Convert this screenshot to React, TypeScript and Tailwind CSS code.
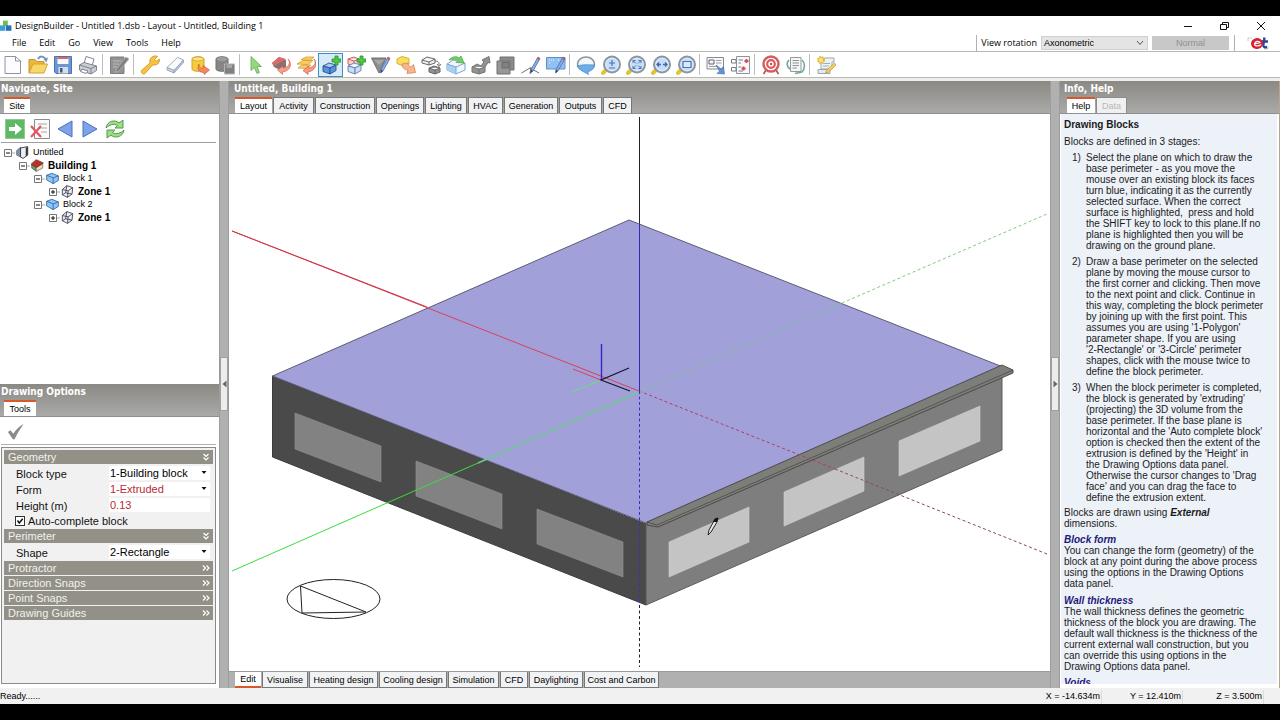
import React from "react";

type IconProps = { children: React.ReactNode; className?: string };

function Icon({ children, className = "h-5 w-5" }: IconProps) {
  return (
    <svg viewBox="0 0 20 20" className={className} fill="none" aria-hidden="true">
      {children}
    </svg>
  );
}

/* ---------- toolbar drawings ---------- */

const pencil = (
  <>
    <path d="M17 2 L19 3.5 L12 16 L9.5 18 L10 14.5 Z" fill="#86aee0" stroke="#4d6fa8" strokeWidth="0.8" />
    <path d="M17 2 L19 3.5 L18 5.2 L16 3.8 Z" fill="#d9534a" />
    <path d="M10 14.5 L12 16 L9.5 18 Z" fill="#3c4350" />
  </>
);

const plus = (
  <path d="M14 1h3v3h3v3h-3v3h-3V7h-3V4h3Z" fill="#4fc742" stroke="#259028" strokeWidth="0.8" />
);

const lens = (
  <>
    <path d="M2 18 L5.5 14.5" stroke="#e5c332" strokeWidth="4" strokeLinecap="round" />
    <circle cx="11" cy="9.5" r="8" fill="#b9d3f2" stroke="#8b969f" strokeWidth="2" />
    <circle cx="11" cy="9.5" r="6.3" fill="#c6dcf7" stroke="#e8f1fb" strokeWidth="0.8" />
  </>
);

function box(fill: string, top: string, stroke: string) {
  return (
    <g stroke={stroke} strokeWidth="0.9" strokeLinejoin="round">
      <path d="M2 11 L8 8 L15 10 L9 13 Z" fill={top} />
      <path d="M2 11 L9 13 V19 L2 16.5 Z" fill={fill} />
      <path d="M9 13 L15 10 V15.5 L9 19 Z" fill={fill} />
    </g>
  );
}

const ICONS: Record<string, React.ReactNode> = {
  New: (
    <path d="M2 1.5 H12.5 L17.5 6 V18.5 H2 Z M12.5 1.5 V6 H17.5" fill="#fdfdff" stroke="#8d93a0" />
  ),
  Open: (
    <>
      <path d="M1 18 V4.5 H7 L9 6.5 H16 V9" fill="#e9b93c" stroke="#c5942b" />
      <path d="M1 18 L5 9 H19.5 L16 18 Z" fill="#f9d766" stroke="#d2a136" />
      <path d="M10 4 C12 0.5 16 1 18 4.5" stroke="#6f91c4" strokeWidth="2" />
      <path d="M15.5 4 L20 2.5 L18.5 7.5 Z" fill="#6f91c4" />
    </>
  ),
  Save: (
    <>
      <path d="M1.5 1.5 H18.5 V18.5 H3 L1.5 17 Z" fill="#6a97d2" stroke="#4a74b0" />
      <path d="M4.5 2 H15.5 V9 H4.5 Z" fill="#f7f9fc" />
      <path d="M4.5 2 H15.5 V4 H4.5 Z" fill="#e0645a" />
      <path d="M5.5 12 H15 V18.5 H5.5 Z" fill="#d7dde6" />
      <path d="M7 13 H9.5 V17.5 H7 Z" fill="#47576e" />
    </>
  ),
  Print: (
    <g stroke="#737985" strokeWidth="0.9" strokeLinejoin="round">
      <path d="M6 9 L8 1.5 L16 4 L14 11 Z" fill="#fff" />
      <path d="M1.5 10 L6 7.5 L18.5 11 V15.5 L13 19 L1.5 15 Z" fill="#c9cdd6" />
      <path d="M1.5 10 L13 13.5 L18.5 11 M13 13.5 V19" />
      <path d="M4 14 L10 16 L8 18.5 L2.5 16.5 Z" fill="#fff" />
    </g>
  ),
  "Edit notes": (
    <>
      <path d="M1.5 2 H15 V18.5 H1.5 Z" fill="#929292" stroke="#7d7d7d" />
      <path d="M4 6 H12 M4 9 H10 M4 12 H8" stroke="#bdbdbd" />
      <path d="M17 2 L20 4 L10 16 L6.5 17.5 L7.5 14 Z" fill="#7f7f7f" stroke="#b9b9b9" strokeWidth="0.8" />
    </>
  ),
  Options: (
    <path
      d="M12 2 C14 0.5 17 0.7 17.5 1.5 L14.5 4.5 L16 6.5 L19.3 4 C20 7 18 10 14.5 10 L12.5 10 L5 18.5 C3.5 20 0.5 18 1.5 15.5 L10 8 C9.5 5 10 3.5 12 2 Z"
      fill="#f8c23e"
      stroke="#d2962a"
      strokeWidth="0.9"
    />
  ),
  Erase: (
    <g stroke="#98a1b3" strokeWidth="0.9" strokeLinejoin="round">
      <path d="M2 12.5 L12.5 2.5 L18.5 5 L9 15.5 Z" fill="#fafbfe" />
      <path d="M2 12.5 L9 15.5 V18 L2 15 Z" fill="#d1d8e6" />
      <path d="M9 15.5 L18.5 5 V7.5 L9 18 Z" fill="#bcc6da" />
    </g>
  ),
  Database: (
    <>
      <path d="M2 4 C2 1 14 1 14 4 V14 C14 17 2 17 2 14 Z" fill="#f6cc3c" stroke="#d3a02c" />
      <ellipse cx="8" cy="4" rx="5.8" ry="2" fill="#fce585" stroke="#d3a02c" strokeWidth="0.8" />
      <path d="M9 9 C9 12.5 11 13.5 13 13.5 V10.5 L19.5 15 L14 19.5 V17.5 C9 17.5 6.5 14 9 9 Z" fill="#ef8a5c" stroke="#cf5b35" strokeWidth="0.7" />
    </>
  ),
  "Save database": (
    <>
      <path d="M1 4 C1 1 13 1 13 4 V14 C13 17 1 17 1 14 Z" fill="#868686" stroke="#6f6f6f" />
      <ellipse cx="7" cy="4" rx="5.5" ry="2" fill="#9d9d9d" />
      <path d="M9.5 9 H19.5 V19 H9.5 Z" fill="#808080" stroke="#b5b5b5" />
      <path d="M11.5 9.5 H17 V13 H11.5 Z" fill="#a5a5a5" />
    </>
  ),
  Select: (
    <path d="M5 1.5 L5 15.5 L8.3 12.5 L11 18.5 L13.5 17.5 L11 11.5 L15.5 11.5 Z" fill="#8fdc79" stroke="#7aa86f" strokeWidth="0.9" />
  ),
  Orbit: (
    <>
      <path d="M1 8 L8 2 L15 5 V12 L9 15 L3 12 Z" fill="#8a7070" />
      <path d="M1 8 L8 2 L15 4 L8 8 L4 11 Z" fill="#dc6a68" />
      <path d="M17 4 C20.5 8 17 13 12 13 V11 L6.5 15 L11.5 19.5 V17 C19 16 22 9 17 4 Z" fill="#f3a08c" stroke="#d4604c" strokeWidth="0.7" />
    </>
  ),
  Slice: (
    <>
      <path d="M1 9 L7 5.5 H17 L12 9.5 Z M2 13 L6 10 H15 L11 13.5 Z M5 4.5 L10 2 H18 L14 5.5 Z" fill="#f7cf5b" stroke="#d59c35" strokeWidth="0.8" />
      <path d="M18 4 C21 8 18 12 12.5 13 V11 L7 15.5 L12 19.5 V17 C19 16 22 9 18 4 Z" fill="#f29a80" stroke="#d4604c" strokeWidth="0.7" />
    </>
  ),
  "Add block": (
    <>
      {box("#5b92df", "#a9caf4", "#27508f")}
      {plus}
    </>
  ),
  "Add outline block": (
    <>
      <path d="M2 4 L8 2 L13 4 V9 L8 11 L2 9 Z M2 4 L8 6 L13 4 M8 6 V11" fill="#f6d2cc" stroke="#cf6257" />
      {box("#cddcf3", "#eef4fd", "#5f7fb5")}
      {plus}
    </>
  ),
  "Draw surface": (
    <>
      <path d="M0.5 3 L15 3 L8 18 Z" fill="#8d8d8d" stroke="#6f6f6f" />
      <path d="M3 5 L13 5 L8 10 Z" fill="#a9a9a9" />
      {pencil}
    </>
  ),
  Move: (
    <>
      <path d="M1 4 L6 1.5 L13 3.5 V9 L8 11 L1 8.5 Z" fill="#f9e05c" stroke="#dcae31" />
      <path d="M6 9 C6 12 8 15 12 15 L11 18.5 L19.5 17.5 L17.5 9.5 L15.5 12 C13 12 12 10 12 8 Z" fill="#f4b98a" stroke="#dd7d5a" strokeWidth="0.8" />
    </>
  ),
  Copy: (
    <g stroke="#696969" strokeWidth="1" strokeLinejoin="round">
      <path d="M1 5 L6 2 L14 4 V8 L8 10 L1 8 Z M1 5 L8 7 L14 4 M8 7 V10" fill="#f0f0f0" />
      <path d="M8 13 L13 11 L19 13 V17 L14 19 L8 17 Z M8 13 L14 15 L19 13 M14 15 V19" fill="#929292" />
      <path d="M14 6 C18 6 18 8 18 10 M16 9 L18 11.5 L20 9" />
    </g>
  ),
  Stretch: (
    <>
      <path d="M1 9 L7 5 L19 8 V15 L10 19 L1 15 Z" fill="#f1f6fd" stroke="#7ca5cf" />
      <path d="M1 9 L10 12 V19 L1 15 Z" fill="#a8d0f2" />
      <path d="M1 9 L10 12 L19 8 M10 12 V19" stroke="#7ca5cf" />
      <path d="M3 5 C6 1 11 1 13 3 L15 1 L18 8 L10 7.5 L12 5.5 C10 4 7 4 3 5 Z" fill="#6fce66" stroke="#4aa847" strokeWidth="0.7" />
    </>
  ),
  "Push pull": (
    <path d="M1 12 L6 9 L10 11 L13 7 L11 5 L18 1.5 L19 8 L17 7.5 L14 12 V17 L8 19 L1 17 Z M1 12 L8 14 L14 12 M8 14 V19" fill="#929292" stroke="#747474" />
  ),
  Merge: (
    <>
      <path d="M4 2 H18 V15 H4 Z" fill="#8b8b8b" stroke="#717171" />
      <path d="M1 6 H14 V19 H1 Z" fill="#969696" stroke="#717171" />
      <path d="M6 7.5 H13 V13 H6 Z" fill="#808080" stroke="#6a6a6a" />
    </>
  ),
  "Draw line": (
    <>
      <path d="M0.5 18 L9 13 L18 18 M9 19 L10 12" stroke="#6e6e6e" />
      {pencil}
    </>
  ),
  "Draw on grid": (
    <>
      <path d="M0.5 2.5 H19 V14 H0.5 Z" fill="#90c0f5" stroke="#6390cb" />
      <path d="M3 5 H8 M3 8 H5 M12 5 H14" stroke="#fff" strokeDasharray="1 1" />
      {pencil}
    </>
  ),
  Rotate: (
    <>
      <ellipse cx="10" cy="9" rx="8.5" ry="7" fill="#f5f6f8" stroke="#8e959d" strokeWidth="1.6" />
      <path d="M1 11 C5 9.5 12 9.5 18.5 10 C18 14 15 16 12 16.5 L12.5 19.5 L6 16 L1.5 12 Z" fill="#6aaeea" stroke="#4783bd" strokeWidth="0.6" />
    </>
  ),
  Zoom: (
    <>
      {lens}
      <path d="M11 5 V11 M8 8 H14 M8 13 H14" stroke="#4a74b8" strokeWidth="1.2" />
    </>
  ),
  "Fit view": (
    <>
      {lens}
      <path d="M7 8 V5.5 H9.5 M12.5 5.5 H15 V8 M15 11 V13.5 H12.5 M9.5 13.5 H7 V11 M7 5.5 L10 8.5 M15 5.5 L12 8.5 M15 13.5 L12 10.5 M7 13.5 L10 10.5" stroke="#4a74b8" />
    </>
  ),
  Pan: (
    <>
      {lens}
      <path d="M6 9.5 H10 M12 9.5 H16 M8 7.5 L6 9.5 L8 11.5 M14 7.5 L16 9.5 L14 11.5" stroke="#3f68ae" strokeWidth="1.3" />
    </>
  ),
  "Zoom window": (
    <>
      {lens}
      <path d="M7 6.5 H15 V12.5 H7 Z" fill="#dceafb" stroke="#4a74b8" strokeWidth="1.2" />
    </>
  ),
  Legend: (
    <>
      <path d="M1 2.5 H17.5 V14 H1 Z" fill="#f7f7f8" stroke="#8a8a8a" />
      <path d="M3 5 H8 V9 H3 Z" stroke="#5d6570" />
      <path d="M10 5.5 H15.5 M10 8 H15.5 M3 11.5 H11" stroke="#9da2aa" />
      <path d="M10 10 L15 14 L17.5 11.5 L18.5 19 L11 18.5 L13.5 16 Z" fill="#6391d7" stroke="#3f6bb0" strokeWidth="0.6" />
    </>
  ),
  Compare: (
    <>
      <path d="M5.5 1.5 H18.5 V18.5 H5.5 Z" fill="#f8f8f9" stroke="#8f949c" />
      <path d="M0.5 4.5 H5 V8 H0.5 Z M0.5 12.5 H5 V16 H0.5 Z" fill="#fff" stroke="#777c86" />
      <path d="M7.5 5 H12 M7.5 8 H10 M7.5 12 H10 M7.5 16 H12" stroke="#777c86" />
      <path d="M15.5 4 V8 M13.5 6 H17.5 M12.5 11.5 V15.5 M10.5 13.5 H14.5" stroke="#d7495a" strokeWidth="1.8" />
    </>
  ),
  Target: (
    <>
      <path d="M5 15 L2.5 19 M15 15 L17.5 19" stroke="#a45a45" strokeWidth="1.6" />
      <circle cx="10" cy="9" r="7.5" fill="#fff" stroke="#d65a5f" strokeWidth="2.4" />
      <circle cx="10" cy="9" r="3.8" fill="#fff" stroke="#d65a5f" strokeWidth="2.2" />
      <circle cx="10" cy="9" r="1.2" fill="#d3454b" />
    </>
  ),
  Report: (
    <>
      <path d="M4.5 2.5 H15 V16.5 H4.5 Z" fill="#f5f6f6" stroke="#949a9c" />
      <path d="M6.5 5.5 H13 M6.5 8 H13 M6.5 10.5 H13 M6.5 13 H11" stroke="#8f9598" />
      <path d="M3 5 C0 8 1 12 4 14 M16 5 C19.5 8 19 14 16 17 L9 18.5" stroke="#6da996" strokeWidth="1.6" />
    </>
  ),
  Script: (
    <>
      <path d="M7 3 H18 V7 H16 V14 H5 V7 H7 Z" fill="#eef3f6" stroke="#9aa8ad" />
      <path d="M2 14.5 H14 V18.5 H2 Z" fill="#e1eaee" stroke="#9aa8ad" />
      <path d="M7 8.5 H14 M7 11 H13" stroke="#a1adb3" />
      <circle cx="5" cy="5" r="3" fill="#fbe27a" stroke="#dfb22f" strokeWidth="1.8" strokeDasharray="1.6 0.8" />
      <path d="M18.5 8 L20 10 L12 17.5 L9.5 18 L10.5 15.5 Z" fill="#f6d160" stroke="#c39a3a" strokeWidth="0.8" />
    </>
  ),
};

const TOOL_GROUPS = [
  ["New", "Open", "Save", "Print"],
  ["Edit notes"],
  ["Options", "Erase", "Database", "Save database"],
  [
    "Select",
    "Orbit",
    "Slice",
    "Add block",
    "Add outline block",
    "Draw surface",
    "Move",
    "Copy",
    "Stretch",
    "Push pull",
    "Merge",
    "Draw line",
    "Draw on grid",
  ],
  ["Rotate", "Zoom", "Fit view", "Pan", "Zoom window"],
  ["Legend", "Compare"],
  ["Target", "Report"],
  ["Script"],
];

const MENUS = ["File", "Edit", "Go", "View", "Tools", "Help"];

function TitleBar() {
  return (
    <div className="flex h-[19px] shrink-0 items-center bg-white">
      <Icon className="h-3 w-3 shrink-0">
        <path d="M5 1 H13 V10 H5 Z" fill="#6cc04a" />
        <path d="M0 9 H9 V18 H0 Z" fill="#3f9bd8" />
        <path d="M10 9 H19 V18 H10 Z" fill="#2470b8" />
      </Icon>
      <h1 className="ml-[3px] font-['Open_Sans','Noto_Sans',sans-serif] text-[9px] text-black">
        DesignBuilder - Untitled 1.dsb - Layout - Untitled, Building 1
      </h1>
      <div className="ml-auto flex">
        <button aria-label="Minimise" className="flex w-9 justify-center">
          <svg viewBox="0 0 10 10" className="h-[10px] w-[10px]">
            <path d="M1 5.5 H9" stroke="#111" />
          </svg>
        </button>
        <button aria-label="Restore" className="flex w-9 justify-center">
          <svg viewBox="0 0 10 10" className="h-[10px] w-[10px]" fill="none">
            <path d="M1.5 3.5 H7.5 V8.5 H1.5 Z M3.5 3.5 V1.5 H9.5 V6.5 H7.5" stroke="#111" />
          </svg>
        </button>
        <button aria-label="Close" className="flex w-[38px] justify-center">
          <svg viewBox="0 0 10 10" className="h-[10px] w-[10px]">
            <path d="M1 1 L9 9 M9 1 L1 9" stroke="#111" />
          </svg>
        </button>
      </div>
    </div>
  );
}

function MenuBar() {
  return (
    <div className="flex h-[17px] shrink-0 items-center border-b border-[#b8b8b8] bg-white">
      <nav className="flex gap-[13px] pl-3 font-['Open_Sans','Noto_Sans',sans-serif] text-[9px] leading-4 text-black">
        {MENUS.map((menu) => (
          <button key={menu}>{menu}</button>
        ))}
      </nav>
      <div className="ml-auto flex h-4 items-center">
        <div className="h-4 w-px bg-[#b0b0b0]" />
        <label
          htmlFor="rotation"
          className="ml-1 font-['Open_Sans','Noto_Sans',sans-serif] text-[9px] text-black"
        >
          View rotation
        </label>
        <div className="relative ml-1">
          <select
            id="rotation"
            className="block h-[14px] w-[107px] appearance-none border border-[#d0d0d0] bg-[#e4e4e4] pl-[2px] font-['Liberation_Sans',sans-serif] text-[9px] leading-3 text-black"
          >
            <option>Axonometric</option>
          </select>
          <svg viewBox="0 0 8 6" className="pointer-events-none absolute top-1 right-1 h-[6px] w-2" fill="none">
            <path d="M1 1 L4 4.5 L7 1" stroke="#555" />
          </svg>
        </div>
        <button
          disabled
          className="ml-1 h-[14px] w-[77px] bg-[#c8c8c8] font-['Liberation_Sans',sans-serif] text-[9px] leading-[14px] text-[#909090]"
        >
          Normal
        </button>
        <div className="ml-[5px] h-4 w-px bg-[#b0b0b0]" />
        <svg viewBox="0 0 22 14" className="mr-[11px] ml-3 h-[14px] w-[22px]" fill="none" aria-label="et">
          <path d="M1 5 V2 H5 M21 10 V13 H17" stroke="#b9c2cc" strokeWidth="0.8" />
          <path d="M17.5 1.5 L16.3 9 C16.3 11.5 18 11.5 20 11 M14 5.5 H21" stroke="#2a479c" strokeWidth="2.4" />
          <ellipse cx="10" cy="7.5" rx="6" ry="5.5" fill="#d8232c" transform="rotate(-15 10 7.5)" />
          <path d="M7.5 8 L13 6.5 C12 4.5 8 5 7.5 8 C7.5 10.5 11.5 10.5 14 8.5" stroke="#fff" strokeWidth="1.2" />
        </svg>
      </div>
    </div>
  );
}

function Toolbar() {
  return (
    <div className="flex h-[26px] shrink-0 items-center border-b border-[#b8b8b8] bg-white">
      {TOOL_GROUPS.map((group, index) => (
        <React.Fragment key={group[0]}>
          {index > 0 && (
            <div className={`mr-[3px] h-[21px] w-px bg-[#bdbdbd] ${index > 3 ? "ml-px" : "ml-[2px]"}`} />
          )}
          {group.map((name) => (
            <button
              key={name}
              aria-label={name}
              className={`flex h-6 w-[25px] items-center justify-center ${
                name === "Add block" ? "border border-[#3f8fc4] bg-[#d7eafa]" : ""
              }`}
            >
              <Icon className="h-5 w-5 shrink-0">{ICONS[name]}</Icon>
            </button>
          ))}
        </React.Fragment>
      ))}
    </div>
  );
}

type Tab = { label: string; width: string; disabled?: boolean };

type PanelHeaderProps = { title: string; tabs: Tab[]; tabInset?: string; titleInset?: string };

function PanelHeader({ title, tabs, tabInset = "pl-1", titleInset = "pl-px" }: PanelHeaderProps) {
  return (
    <div className="flex h-[33px] shrink-0 flex-col justify-between border-b border-[#8f8f8f] bg-gradient-to-b from-[#8b8983] to-[#aaaaa9]">
      <h2
        className={`h-4 font-['DejaVu_Sans_Condensed','DejaVu_Sans',sans-serif] text-[10px] leading-4 font-bold text-white ${titleInset}`}
      >
        {title}
      </h2>
      <div className={`flex gap-px ${tabInset}`}>
        {tabs.map((tab, index) => (
          <button
            key={tab.label}
            disabled={tab.disabled}
            className={`h-4 text-center font-['Liberation_Sans',sans-serif] text-[9px] whitespace-nowrap ${tab.width} ${
              index === 0
                ? "border-t-2 border-[#d9572b] bg-white pt-px leading-[13px] text-black"
                : tab.disabled
                  ? "border border-b-0 border-[#8c8c8c] bg-[#f0f0f0] pt-px leading-[14px] text-[#b8b8b8]"
                  : "border border-b-0 border-[#777] bg-[#f1f2f4] pt-px leading-[14px] text-black"
            }`}
          >
            {tab.label}
          </button>
        ))}
      </div>
    </div>
  );
}

/* ---------- left column ---------- */

const NAV_ICONS: Record<string, React.ReactNode> = {
  Go: (
    <>
      <path d="M0.5 0.5 H19.5 V19.5 H0.5 Z" fill="#5fb865" stroke="#8fc893" />
      <path d="M4 8 H10 V4 L17 10 L10 16 V12 H4 Z" fill="#fff" />
    </>
  ),
  Delete: (
    <>
      <path d="M4.5 0.5 H19.5 V19.5 H4.5 Z" fill="#fafafa" stroke="#8c8c8c" />
      <path d="M8 5 H17 M8 9 H17 M11 13 H17" stroke="#a5a5a5" />
      <path d="M1 7 L11 18 M11 7 L1 18" stroke="#e0565f" strokeWidth="2.2" />
    </>
  ),
  Back: <path d="M17 2 V18 L3 10 Z" fill="#7fa3e6" stroke="#4a70c0" />,
  Forward: <path d="M3 2 V18 L17 10 Z" fill="#7fa3e6" stroke="#4a70c0" />,
  Refresh: (
    <>
      <path d="M1 9 C2 2 10 0 14 4 L18 1 V9 H10 L12.5 6.5 C9 4 4 6 1 9 Z" fill="#9ade86" stroke="#549a4b" />
      <path d="M19 11 C18 18 10 20 6 16 L2 19 V11 H10 L7.5 13.5 C11 16 16 14 19 11 Z" fill="#9ade86" stroke="#549a4b" />
    </>
  ),
};

const TREE_ICONS: Record<string, React.ReactNode> = {
  site: (
    <>
      <path d="M1 7 L7 2 V17 L1 14 Z" fill="#8291b3" stroke="#555" />
      <path d="M7 3 L18 1 V14 L11 19 L7 17 Z" fill="#eceef2" stroke="#333" strokeWidth="1.4" />
      <path d="M15 3 L18 1 V14 L15 16 Z" fill="#333" />
    </>
  ),
  building: (
    <>
      <path d="M1 9 L8 13 V19 L1 14 Z" fill="#6a9a59" stroke="#555" />
      <path d="M8 12 L18 8 V14 L8 19 Z" fill="#f0dfb5" stroke="#555" />
      <path d="M0 8 L8 1 L19 6 L9 13 Z" fill="#b8322c" stroke="#6b1f1c" />
    </>
  ),
  block: (
    <g stroke="#2d64a4" strokeWidth="1.3" strokeLinejoin="round">
      <path d="M1 5 L9 2 L19 6 V13 L11 18 L1 12 Z" fill="#8fc5f5" />
      <path d="M1 5 L11 9 L19 6 M11 9 V18" />
    </g>
  ),
  zone: (
    <g stroke="#3a3a4a" strokeWidth="1.3" strokeLinejoin="round">
      <path d="M2 7 L9 1 L18 4 L17 14 L10 19 L2 15 Z" fill="#eef0f6" />
      <path d="M2 7 L11 9 L18 4 M11 9 L10 19 M9 1 L7 12 L2 15 M7 12 L17 14" />
    </g>
  ),
};

const TREE = [
  { label: "Untitled", icon: "site", indent: "pl-1", open: true, bold: false },
  { label: "Building 1", icon: "building", indent: "pl-[19px]", open: true, bold: true },
  { label: "Block 1", icon: "block", indent: "pl-[34px]", open: true, bold: false },
  { label: "Zone 1", icon: "zone", indent: "pl-[49px]", open: false, bold: true },
  { label: "Block 2", icon: "block", indent: "pl-[34px]", open: true, bold: false },
  { label: "Zone 1", icon: "zone", indent: "pl-[49px]", open: false, bold: true },
];

function Navigator() {
  return (
    <section className="flex h-[303px] shrink-0 flex-col bg-white">
      <PanelHeader title="Navigate, Site" tabs={[{ label: "Site", width: "w-[26px]" }]} />
      <div className="mr-[3px] ml-px flex h-[29px] shrink-0 items-center gap-[5px] border-b border-[#9f9f9f] pt-px pl-1">
        {Object.keys(NAV_ICONS).map((name) => (
          <button key={name} aria-label={name}>
            <Icon>{NAV_ICONS[name]}</Icon>
          </button>
        ))}
      </div>
      <ul className="mt-[3px] font-['Liberation_Sans',sans-serif] text-[9px] text-black">
        {TREE.map((node, index) => (
          <li key={index} className={`flex h-[13px] items-center ${node.indent}`}>
            <svg viewBox="0 0 11 8" className="h-2 w-[11px] shrink-0" fill="none">
              <path d="M0.5 0.5 H7.5 V7.5 H0.5 Z" fill="#fff" stroke="#777" />
              <path d={node.open ? "M2 4 H6" : "M2 4 H6 M4 2 V6"} stroke="#111" />
              <path d="M8 4 H11" stroke="#aaa" />
            </svg>
            <Icon className="mx-px h-[13px] w-[13px] shrink-0">{TREE_ICONS[node.icon]}</Icon>
            <span className={node.bold ? "ml-[3px] text-[10px] font-bold" : "ml-[3px]"}>{node.label}</span>
          </li>
        ))}
      </ul>
    </section>
  );
}

function GroupHeader({ label, open = false }: { label: string; open?: boolean }) {
  return (
    <button className="flex h-[14px] w-full items-center justify-between bg-[#929087] pr-[3px] pl-1 text-[11px] leading-[14px] text-[#f3f2ec]">
      {label}
      <svg viewBox="0 0 8 8" className="h-2 w-2" fill="none">
        <path
          d={open ? "M1.5 1 L4 3.5 L6.5 1 M1.5 4.5 L4 7 L6.5 4.5" : "M1 1.5 L3.5 4 L1 6.5 M4.5 1.5 L7 4 L4.5 6.5"}
          stroke="#fff"
          strokeWidth="1.2"
        />
      </svg>
    </button>
  );
}

type FieldProps = { id: string; label: string; value: string; red?: boolean };

function SelectField({ id, label, value, red = false }: FieldProps) {
  return (
    <div className="flex h-4 items-center pl-3">
      <label htmlFor={id} className="w-[93px] pt-[2px]">
        {label}
      </label>
      <div className="relative mr-[3px] flex-1">
        <select
          id={id}
          className={`block h-[14px] w-full appearance-none bg-white pl-px leading-[14px] ${red ? "text-[#b82a36]" : "text-black"}`}
        >
          <option>{value}</option>
        </select>
        <svg viewBox="0 0 6 4" className="pointer-events-none absolute top-[5px] right-[3px] h-1 w-[6px]">
          <path d="M0.5 0 H5.5 L3 3 Z" fill="#111" />
        </svg>
      </div>
    </div>
  );
}

function DrawingOptions() {
  return (
    <section className="flex min-h-0 flex-1 flex-col bg-white">
      <PanelHeader title="Drawing Options" tabs={[{ label: "Tools", width: "w-8" }]} />
      <div className="mr-[3px] ml-px flex h-[28px] shrink-0 items-center border-b border-[#b0b0b0] pt-[2px] pl-[6px]">
        <button aria-label="Apply">
          <Icon className="h-[18px] w-[18px]">
            <path d="M1 10 L4 8 L7 12 C10 7 14 3 18.5 1 C15 6 11 12 8.5 18 H6.5 Z" fill="#8b8b8b" />
          </Icon>
        </button>
      </div>
      <div className="mt-[2px] mr-[3px] mb-1 ml-px flex-1 border border-[#8a8a8a] bg-[#f1f1f1] px-[2px] pt-[2px] font-['Liberation_Sans',sans-serif] text-[11px] text-[#111]">
        <GroupHeader label="Geometry" open />
        <div className="pt-px">
          <SelectField id="block-type" label="Block type" value="1-Building block" />
          <SelectField id="form" label="Form" value="1-Extruded" red />
          <div className="flex h-4 items-center pl-3">
            <label htmlFor="height" className="w-[93px] pt-[2px]">
              Height (m)
            </label>
            <input
              id="height"
              defaultValue="0.13"
              className="mr-[3px] h-[14px] min-w-0 flex-1 bg-white pl-px text-[#b82a36]"
            />
          </div>
          <label className="flex h-4 items-center gap-[3px] pl-[11px]">
            <span className="relative flex h-[10px] w-[10px]">
              <input
                type="checkbox"
                defaultChecked
                className="peer h-[10px] w-[10px] appearance-none border border-[#333] bg-white"
              />
              <svg viewBox="0 0 10 10" className="pointer-events-none absolute inset-0 hidden peer-checked:block" fill="none">
                <path d="M2.5 4.5 L4.3 7 L7.7 2.8" stroke="#111" strokeWidth="1.5" />
              </svg>
            </span>
            Auto-complete block
          </label>
        </div>
        <GroupHeader label="Perimeter" open />
        <div className="py-px">
          <SelectField id="shape" label="Shape" value="2-Rectangle" />
        </div>
        <div className="flex flex-col gap-px">
          <GroupHeader label="Protractor" />
          <GroupHeader label="Direction Snaps" />
          <GroupHeader label="Point Snaps" />
          <GroupHeader label="Drawing Guides" />
        </div>
      </div>
    </section>
  );
}

function Splitter({ direction }: { direction: "left" | "right" }) {
  return (
    <div className="flex w-[10px] shrink-0 flex-col border-x border-[#9c9c9c] bg-[#b0b0b0]">
      <button
        aria-label={`Collapse ${direction} panel`}
        className="mt-[276px] flex h-[54px] items-center justify-center border border-[#a0a0a0] bg-[#ececec]"
      >
        <svg viewBox="0 0 5 8" className="h-2 w-[5px]">
          <path d={direction === "left" ? "M4.5 0.5 V7.5 L0.5 4 Z" : "M0.5 0.5 V7.5 L4.5 4 Z"} fill="#666" />
        </svg>
      </button>
    </div>
  );
}

/* ---------- model view ---------- */

const LAYOUT_TABS: Tab[] = [
  { label: "Layout", width: "w-[37px]" },
  { label: "Activity", width: "w-[41px]" },
  { label: "Construction", width: "w-[60px]" },
  { label: "Openings", width: "w-12" },
  { label: "Lighting", width: "w-[42px]" },
  { label: "HVAC", width: "w-[35px]" },
  { label: "Generation", width: "w-[54px]" },
  { label: "Outputs", width: "w-[43px]" },
  { label: "CFD", width: "w-[29px]" },
];

const SCREEN_TABS: Tab[] = [
  { label: "Edit", width: "w-[26px]" },
  { label: "Visualise", width: "w-[46px]" },
  { label: "Heating design", width: "w-[69px]" },
  { label: "Cooling design", width: "w-[68px]" },
  { label: "Simulation", width: "w-[51px]" },
  { label: "CFD", width: "w-[28px]" },
  { label: "Daylighting", width: "w-[54px]" },
  { label: "Cost and Carbon", width: "w-[75px]" },
];

function ModelView() {
  return (
    <svg viewBox="229 114 821 557" className="min-h-0 w-full flex-1 bg-white" fill="none" role="img" aria-label="Axonometric building model">
      {/* walls */}
      <path d="M272.5 376 L646 524 V605 L272.5 457 Z" fill="#4a4a4a" stroke="#3c3c3c" />
      <path d="M646 524 L1002 368 V450 L646 605 Z" fill="#7e7e7e" stroke="#5c5c5c" />

      {/* roof */}
      <path d="M272.5 376 L629 220 L1003 367 L646 523 Z" fill="#a2a0d8" stroke="#5d5c74" />

      {/* glazing */}
      <g fill="#828282" stroke="#939393" strokeWidth="0.6">
        <path d="M295 413 L381 446 V482 L295 449 Z" />
        <path d="M416 461 L502 494 V529 L416 496 Z" />
        <path d="M537 509 L623 542 V577 L537 544 Z" />
      </g>
      <g fill="#c4c4c4" stroke="#d2d2d2" strokeWidth="0.6">
        <path d="M669 542 L749 507 V542 L669 577 Z" />
        <path d="M784 492 L864 457 V491 L784 526 Z" />
        <path d="M899 441 L980 406 V441 L899 476 Z" />
      </g>

      {/* new block along the eaves */}
      <path d="M647 522 L1002 365 L1013 370 V373 L658 527 L647 525 Z" fill="#7d7d7a" stroke="#44443f" strokeWidth="0.9" />
      <path d="M647 522 L657 525 L1013 370" stroke="#44443f" strokeWidth="0.7" />

      {/* axes */}
      <path d="M232 231 L639 391" stroke="#d8405f" />
      <path d="M232 231 L427 307" stroke="#d03a44" />
      <path d="M639 391 L835 469" stroke="#b23a68" strokeDasharray="3 2.5" />
      <path d="M835 469 L1047 554" stroke="#8a4a50" strokeDasharray="3 2.5" />
      <path d="M232 571 L478 463" stroke="#3ddc3d" />
      <path d="M478 463 L639 392" stroke="#6ecb8f" strokeWidth="1.4" />
      <path d="M639 392 L842 303" stroke="#85bdab" strokeDasharray="5 1" />
      <path d="M842 303 L1047 214" stroke="#7dcb7d" strokeDasharray="3 2.5" />
      <path d="M639.5 117 V223" stroke="#222" />
      <path d="M639.5 223 V391" stroke="#2f2bb4" />
      <path d="M639.5 391 V605" stroke="#3431c4" strokeDasharray="3 2.5" />
      <path d="M639.5 605 V667" stroke="#222" strokeDasharray="3 2.5" />

      {/* local origin */}
      <path d="M572 392 L601 380" stroke="#7cc8a0" strokeWidth="1.4" />
      <path d="M573 369 L601 380" stroke="#d8405f" />
      <path d="M601.5 344 V380" stroke="#2f2bc8" strokeWidth="1.4" />
      <path d="M629 368 L601 380 L630 391" stroke="#15152c" strokeWidth="1.2" />

      {/* north arrow */}
      <ellipse cx="333.5" cy="599" rx="46.5" ry="19.5" stroke="#222" />
      <path d="M300.5 586 L366 612 L302 613 Z" stroke="#222" />

      {/* pencil cursor */}
      <path d="M708 535 L709 530 L715 519 L718 518 L717 522 L711 532 Z" fill="#e6e6e6" stroke="#111" strokeWidth="0.9" />
      <path d="M713 522 L715.5 518 L718 518 L717 522 Z" fill="#111" />
    </svg>
  );
}

function Workspace() {
  return (
    <main className="flex min-w-0 flex-1 flex-col bg-[#b0b0b0]">
      <PanelHeader
        title="Untitled, Building 1"
        tabs={LAYOUT_TABS}
        tabInset="pl-[6px]"
        titleInset="pl-[5px]"
      />
      <ModelView />
      <div className="flex h-[17px] shrink-0 gap-px border-t border-[#9a9a9a] pl-[6px]">
        {SCREEN_TABS.map((tab, index) => (
          <button
            key={tab.label}
            className={`h-4 pt-px text-center font-['Liberation_Sans',sans-serif] text-[9px] whitespace-nowrap text-black ${tab.width} ${
              index === 0
                ? "border-b-2 border-[#d9572b] bg-white leading-[13px]"
                : "border border-t-0 border-[#777] bg-[#f1f2f4] leading-[14px]"
            }`}
          >
            {tab.label}
          </button>
        ))}
      </div>
    </main>
  );
}

/* ---------- help ---------- */

const STAGES = [
  [
    "Select the plane on which to draw the",
    "base perimeter - as you move the",
    "mouse over an existing block its faces",
    "turn blue, indicating it as the currently",
    "selected surface. When the correct",
    "surface is highlighted,  press and hold",
    "the SHIFT key to lock to this plane.If no",
    "plane is highlighted then you will be",
    "drawing on the ground plane.",
  ],
  [
    "Draw a base perimeter on the selected",
    "plane by moving the mouse cursor to",
    "the first corner and clicking. Then move",
    "to the next point and click. Continue in",
    "this way, completing the block perimeter",
    "by joining up with the first point. This",
    "assumes you are using '1-Polygon'",
    "parameter shape. If you are using",
    "'2-Rectangle' or '3-Circle' perimeter",
    "shapes, click with the mouse twice to",
    "define the block perimeter.",
  ],
  [
    "When the block perimeter is completed,",
    "the block is generated by 'extruding'",
    "(projecting) the 3D volume from the",
    "base perimeter. If the base plane is",
    "horizontal and the 'Auto complete block'",
    "option is checked then the extent of the",
    "extrusion is defined by the 'Height' in",
    "the Drawing Options data panel.",
    "Otherwise the cursor changes to 'Drag",
    "face' and you can drag the face to",
    "define the extrusion extent.",
  ],
];

const BLOCK_FORM = [
  "You can change the form (geometry) of the",
  "block at any point during the above process",
  "using the options in the Drawing Options",
  "data panel.",
];

const WALL_THICKNESS = [
  "The wall thickness defines the geometric",
  "thickness of the block you are drawing. The",
  "default wall thickness is the thickness of the",
  "current external wall construction, but you",
  "can override this using options in the",
  "Drawing Options data panel.",
];

function HelpPanel() {
  return (
    <aside className="flex w-[220px] shrink-0 flex-col border-r border-[#b9a58a] bg-white">
      <PanelHeader
        title="Info, Help"
        tabs={[
          { label: "Help", width: "w-7" },
          { label: "Data", width: "w-[31px]", disabled: true },
        ]}
        tabInset="pl-[7px]"
        titleInset="pl-1"
      />
      <div className="mr-[2px] mb-1 ml-px min-h-0 flex-1 overflow-hidden bg-[#edf1f8] pt-[5px] pl-[3px] font-['Liberation_Sans',sans-serif] text-[10px] leading-[11px] whitespace-pre text-[#1b1b1b]">
        <h3 className="font-bold">Drawing Blocks</h3>
        <p className="mt-[6px]">Blocks are defined in 3 stages:</p>
        <ol className="mt-[5px] flex flex-col gap-[5px]">
          {STAGES.map((lines, index) => (
            <li key={index} className="flex">
              <span className="w-[22px] shrink-0 pl-2">{index + 1})</span>
              <p>{lines.join("\n")}</p>
            </li>
          ))}
        </ol>
        <p className="mt-1">
          Blocks are drawn using <b className="italic">External</b>
          {"\ndimensions."}
        </p>
        <h4 className="mt-[5px] font-bold text-[#1d1a7a] italic">Block form</h4>
        <p>{BLOCK_FORM.join("\n")}</p>
        <h4 className="mt-[6px] font-bold text-[#1d1a7a] italic">Wall thickness</h4>
        <p>{WALL_THICKNESS.join("\n")}</p>
        <h4 className="mt-[5px] font-bold text-[#1d1a7a] italic">Voids</h4>
      </div>
    </aside>
  );
}

function StatusBar() {
  return (
    <footer className="flex h-4 shrink-0 items-center bg-[#f1f1f1] pt-[2px] font-['Liberation_Sans',sans-serif] text-[9px] text-black">
      <span>Ready......</span>
      <div className="ml-auto flex pr-4 text-right">
        <span className="w-20 border-r border-[#dcdcdc] pr-px">X = -14.634m</span>
        <span className="w-[81px] border-r border-[#dcdcdc] pr-px">Y = 12.410m</span>
        <span className="w-[81px] border-r border-[#dcdcdc] pr-px">Z = 3.500m</span>
      </div>
    </footer>
  );
}

export default function App() {
  return (
    <div className="flex h-screen flex-col bg-black py-4">
      <TitleBar />
      <MenuBar />
      <Toolbar />
      <div className="h-[3px] shrink-0 bg-[#efeee8]" />
      <div className="flex min-h-0 flex-1">
        <div className="flex w-[219px] shrink-0 flex-col">
          <Navigator />
          <DrawingOptions />
        </div>
        <Splitter direction="left" />
        <Workspace />
        <Splitter direction="right" />
        <HelpPanel />
      </div>
      <StatusBar />
    </div>
  );
}
